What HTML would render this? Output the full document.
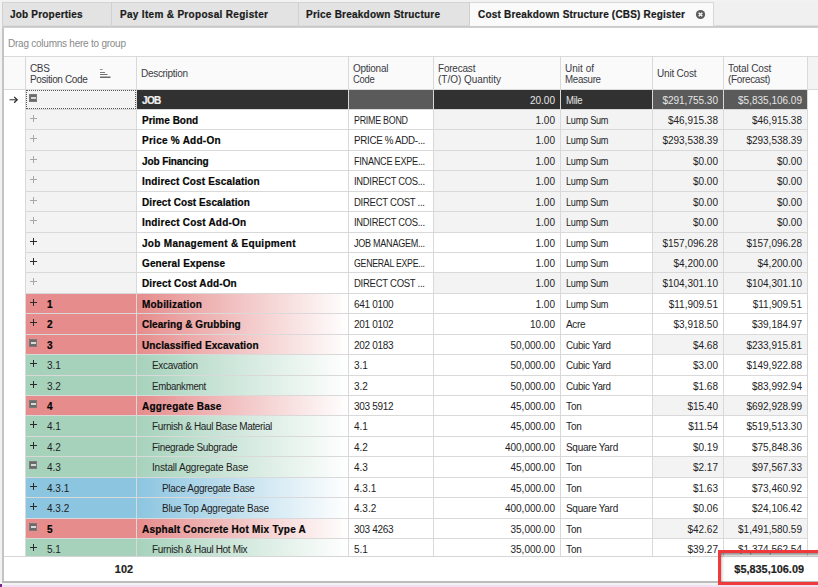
<!DOCTYPE html>
<html><head><meta charset="utf-8"><style>
*{margin:0;padding:0}
html,body{width:818px;height:587px;overflow:hidden;background:#f2f2f2}
.b{position:absolute}
.t{position:absolute;font-family:"Liberation Sans",sans-serif;font-size:10px;line-height:12px;white-space:nowrap;color:#1e1e1e}
.tb{font-weight:bold;letter-spacing:0.15px;color:#1a1a1a;-webkit-text-stroke:0.2px}
.rb{font-weight:bold;color:#050505;letter-spacing:0.15px;-webkit-text-stroke:0.2px}
.r{letter-spacing:-0.33px}
.h{letter-spacing:-0.35px;color:#3a3a44}
.n{letter-spacing:0}
.u{letter-spacing:-0.95px}
.fb{font-weight:bold;font-size:10.9px;-webkit-text-stroke:0.2px}
.mb{width:8px;height:8px;background:#6a6a6a;box-shadow:inset 0 0 0 1px #7a7a7a}
.mb:after{content:"";position:absolute;left:1.5px;top:3px;width:5px;height:2px;background:#d8d8d8}
</style></head>
<body>
<div class="b" style="left:0px;top:0px;width:818px;height:587px;background:#f2f2f2;"></div><div class="b" style="left:2px;top:2px;width:816px;height:24px;background:#f0f0f0;"></div><div class="b" style="left:2px;top:2px;width:109px;height:24px;background:#e3e3e3;"></div><div class="b" style="left:2px;top:2px;width:109px;height:1px;background:#d4d4d4;"></div><div class="b" style="left:2px;top:2px;width:1px;height:24px;background:#d0d0d0;"></div><div class="b" style="left:111px;top:2px;width:187px;height:24px;background:#e3e3e3;"></div><div class="b" style="left:111px;top:2px;width:187px;height:1px;background:#d4d4d4;"></div><div class="b" style="left:111px;top:2px;width:1px;height:24px;background:#d0d0d0;"></div><div class="b" style="left:298px;top:2px;width:172px;height:24px;background:#e3e3e3;"></div><div class="b" style="left:298px;top:2px;width:172px;height:1px;background:#d4d4d4;"></div><div class="b" style="left:298px;top:2px;width:1px;height:24px;background:#d0d0d0;"></div><div class="b" style="left:470px;top:2px;width:244px;height:24px;background:#fafafa;"></div><div class="b" style="left:470px;top:2px;width:244px;height:1px;background:#d8d8d8;"></div><div class="b" style="left:469px;top:2px;width:1px;height:24px;background:#cfcfcf;"></div><div class="b" style="left:713px;top:2px;width:1px;height:24px;background:#d8d8d8;"></div><div class="b" style="left:2px;top:25px;width:468px;height:1px;background:#dadada;"></div><div class="b" style="left:714px;top:25px;width:104px;height:1px;background:#dedede;"></div><div class="t tb" style="top:9px;left:10px;letter-spacing:0.199px;">Job Properties</div><div class="t tb" style="top:9px;left:120px;letter-spacing:0.315px;">Pay Item &amp; Proposal Register</div><div class="t tb" style="top:9px;left:306px;letter-spacing:0.235px;">Price Breakdown Structure</div><div class="t tb" style="top:9px;left:478px;letter-spacing:0.198px;">Cost Breakdown Structure (CBS) Register</div><svg class="b" style="left:695px;top:9px" width="11" height="11" viewBox="0 0 11 11"><circle cx="5.5" cy="5.5" r="4.6" fill="#5c5c5c"/><path d="M3.7 3.7L7.3 7.3M7.3 3.7L3.7 7.3" stroke="#f4f4f4" stroke-width="1.6"/></svg><div class="b" style="left:2px;top:27px;width:816px;height:556px;background:#ffffff;"></div><div class="b" style="left:2px;top:27px;width:2px;height:556px;background:#c4c4c4;"></div><div class="b" style="left:2px;top:581px;width:816px;height:2px;background:#bcbcbc;"></div><div class="b" style="left:2px;top:26px;width:816px;height:1px;background:#c9c9c9;"></div><div class="b" style="left:2px;top:27px;width:816px;height:1px;background:#d0d0d0;"></div><div class="b" style="left:0px;top:583px;width:818px;height:2px;background:#f3f3f3;"></div><div class="b" style="left:0px;top:585px;width:818px;height:2px;background:#f1e0f1;"></div><div class="b" style="left:0px;top:584px;width:2px;height:3px;background:#7a2a8a;"></div><div class="t r" style="top:38px;left:8px;color:#8a8a8a;letter-spacing:-0.238px;">Drag columns here to group</div><div class="b" style="left:4px;top:56px;width:814px;height:1px;background:#dadada;"></div><div class="b" style="left:4px;top:57px;width:814px;height:32px;background:#fafafa;"></div><div class="b" style="left:808px;top:57px;width:10px;height:32px;background:#f3f3f3;"></div><div class="b" style="left:4px;top:89px;width:814px;height:1px;background:#dadada;"></div><div class="b" style="left:25px;top:56px;width:1px;height:33px;background:#d9d9d9;"></div><div class="b" style="left:136px;top:56px;width:1px;height:33px;background:#d9d9d9;"></div><div class="b" style="left:348px;top:56px;width:1px;height:33px;background:#d9d9d9;"></div><div class="b" style="left:433px;top:56px;width:1px;height:33px;background:#d9d9d9;"></div><div class="b" style="left:560px;top:56px;width:1px;height:33px;background:#d9d9d9;"></div><div class="b" style="left:652px;top:56px;width:1px;height:33px;background:#d9d9d9;"></div><div class="b" style="left:723px;top:56px;width:1px;height:33px;background:#d9d9d9;"></div><div class="b" style="left:807px;top:56px;width:1px;height:33px;background:#d9d9d9;"></div><div class="t h" style="top:63px;left:30px;">CBS</div><div class="t h" style="top:74px;left:30px;letter-spacing:-0.380px;">Position Code</div><div class="t h" style="top:68px;left:141px;letter-spacing:-0.302px;">Description</div><div class="t h" style="top:63px;left:353px;letter-spacing:-0.263px;">Optional</div><div class="t h" style="top:74px;left:353px;letter-spacing:-0.3px;transform:scaleX(0.9433);transform-origin:left top;">Code</div><div class="t h" style="top:63px;left:438px;letter-spacing:-0.214px;">Forecast</div><div class="t h" style="top:74px;left:438px;letter-spacing:-0.026px;">(T/O) Quantity</div><div class="t h" style="top:63px;left:565px;letter-spacing:0.017px;">Unit of</div><div class="t h" style="top:74px;left:565px;letter-spacing:-0.3px;transform:scaleX(0.9703);transform-origin:left top;">Measure</div><div class="t h" style="top:68px;left:657px;letter-spacing:-0.203px;">Unit Cost</div><div class="t h" style="top:63px;left:728px;letter-spacing:-0.118px;">Total Cost</div><div class="t h" style="top:74px;left:728px;">(Forecast)</div><svg class="b" style="left:99px;top:68px" width="12" height="11" viewBox="0 0 12 11"><rect x="1" y="1" width="2.5" height="1" fill="#8a8a8a"/><rect x="1" y="4" width="5" height="1" fill="#7a7a7a"/><rect x="1" y="6" width="7.5" height="1" fill="#707070"/><rect x="1" y="8.5" width="10.5" height="1.5" fill="#6a6a6a"/></svg><div class="b" style="left:0;top:0;width:818px;height:556px;overflow:hidden"><div class="b" style="left:26px;top:90px;width:110px;height:19px;background:#f3f3f3;"></div><div class="b" style="left:137px;top:90px;width:211px;height:19px;background:#313131;"></div><div class="b" style="left:349px;top:90px;width:84px;height:19px;background:#5a5a5a;"></div><div class="b" style="left:434px;top:90px;width:126px;height:19px;background:#313131;"></div><div class="b" style="left:561px;top:90px;width:91px;height:19px;background:#313131;"></div><div class="b" style="left:653px;top:90px;width:70px;height:19px;background:#5a5a5a;"></div><div class="b" style="left:724px;top:90px;width:83px;height:19px;background:#5a5a5a;"></div><div class="b" style="left:26px;top:109px;width:781px;height:1px;background:#d9d9d9;"></div><div class="b" style="left:136px;top:89px;width:1px;height:21px;background:#d9d9d9;"></div><div class="b" style="left:348px;top:89px;width:1px;height:21px;background:#d9d9d9;"></div><div class="b" style="left:433px;top:89px;width:1px;height:21px;background:#d9d9d9;"></div><div class="b" style="left:560px;top:89px;width:1px;height:21px;background:#d9d9d9;"></div><div class="b" style="left:652px;top:89px;width:1px;height:21px;background:#d9d9d9;"></div><div class="b" style="left:723px;top:89px;width:1px;height:21px;background:#d9d9d9;"></div><div class="b" style="left:807px;top:89px;width:1px;height:21px;background:#d9d9d9;"></div><div class="b" style="left:25px;top:89px;width:1px;height:21px;background:#d9d9d9;"></div><div class="b mb" style="left:29px;top:94px"></div><div class="t rb" style="top:95px;left:142px;color:#f0f0f0;letter-spacing:-0.630px;">JOB</div><div class="t n" style="top:95px;right:263px;color:#e6e6e6;">20.00</div><div class="t r" style="top:95px;left:566px;color:#e6e6e6;letter-spacing:-0.3px;transform:scaleX(0.9521);transform-origin:left top;">Mile</div><div class="t n" style="top:95px;right:100px;color:#e6e6e6;">$291,755.30</div><div class="t n" style="top:95px;right:16px;color:#e6e6e6;">$5,835,106.09</div><div class="b" style="left:26px;top:90px;width:108px;height:17px;border:1px dotted #555"></div><div class="b" style="left:26px;top:110px;width:110px;height:19px;background:#f3f3f3;"></div><div class="b" style="left:137px;top:110px;width:211px;height:19px;background:#ffffff;"></div><div class="b" style="left:349px;top:110px;width:84px;height:19px;background:#ffffff;"></div><div class="b" style="left:434px;top:110px;width:126px;height:19px;background:#f3f3f3;"></div><div class="b" style="left:561px;top:110px;width:91px;height:19px;background:#f3f3f3;"></div><div class="b" style="left:653px;top:110px;width:70px;height:19px;background:#f3f3f3;"></div><div class="b" style="left:724px;top:110px;width:83px;height:19px;background:#f3f3f3;"></div><div class="b" style="left:26px;top:129px;width:781px;height:1px;background:#d9d9d9;"></div><div class="b" style="left:136px;top:109px;width:1px;height:21px;background:#d9d9d9;"></div><div class="b" style="left:348px;top:109px;width:1px;height:21px;background:#d9d9d9;"></div><div class="b" style="left:433px;top:109px;width:1px;height:21px;background:#d9d9d9;"></div><div class="b" style="left:560px;top:109px;width:1px;height:21px;background:#d9d9d9;"></div><div class="b" style="left:652px;top:109px;width:1px;height:21px;background:#d9d9d9;"></div><div class="b" style="left:723px;top:109px;width:1px;height:21px;background:#d9d9d9;"></div><div class="b" style="left:807px;top:109px;width:1px;height:21px;background:#d9d9d9;"></div><div class="b" style="left:25px;top:109px;width:1px;height:21px;background:#d9d9d9;"></div><svg class="b" style="left:30px;top:115px" width="7" height="7"><path d="M3.5 0V7M0 3.5H7" stroke="#a8a8a8" stroke-width="1"/></svg><div class="t rb" style="top:115px;left:142px;letter-spacing:0.009px;">Prime Bond</div><div class="t u" style="top:115px;left:354px;letter-spacing:-0.3px;transform:scaleX(0.8905);transform-origin:left top;">PRIME BOND</div><div class="t n" style="top:115px;right:263px;">1.00</div><div class="t r" style="top:115px;left:566px;letter-spacing:-0.3px;transform:scaleX(0.9189);transform-origin:left top;">Lump Sum</div><div class="t n" style="top:115px;right:100px;">$46,915.38</div><div class="t n" style="top:115px;right:16px;">$46,915.38</div><div class="b" style="left:26px;top:130px;width:110px;height:20px;background:#f3f3f3;"></div><div class="b" style="left:137px;top:130px;width:211px;height:20px;background:#ffffff;"></div><div class="b" style="left:349px;top:130px;width:84px;height:20px;background:#ffffff;"></div><div class="b" style="left:434px;top:130px;width:126px;height:20px;background:#f3f3f3;"></div><div class="b" style="left:561px;top:130px;width:91px;height:20px;background:#f3f3f3;"></div><div class="b" style="left:653px;top:130px;width:70px;height:20px;background:#f3f3f3;"></div><div class="b" style="left:724px;top:130px;width:83px;height:20px;background:#f3f3f3;"></div><div class="b" style="left:26px;top:150px;width:781px;height:1px;background:#d9d9d9;"></div><div class="b" style="left:136px;top:129px;width:1px;height:22px;background:#d9d9d9;"></div><div class="b" style="left:348px;top:129px;width:1px;height:22px;background:#d9d9d9;"></div><div class="b" style="left:433px;top:129px;width:1px;height:22px;background:#d9d9d9;"></div><div class="b" style="left:560px;top:129px;width:1px;height:22px;background:#d9d9d9;"></div><div class="b" style="left:652px;top:129px;width:1px;height:22px;background:#d9d9d9;"></div><div class="b" style="left:723px;top:129px;width:1px;height:22px;background:#d9d9d9;"></div><div class="b" style="left:807px;top:129px;width:1px;height:22px;background:#d9d9d9;"></div><div class="b" style="left:25px;top:129px;width:1px;height:22px;background:#d9d9d9;"></div><svg class="b" style="left:30px;top:135px" width="7" height="7"><path d="M3.5 0V7M0 3.5H7" stroke="#a8a8a8" stroke-width="1"/></svg><div class="t rb" style="top:135px;left:142px;letter-spacing:0.262px;">Price % Add-On</div><div class="t u" style="top:135px;left:354px;letter-spacing:-0.3px;transform:scaleX(0.9762);transform-origin:left top;">PRICE % ADD-...</div><div class="t n" style="top:135px;right:263px;">1.00</div><div class="t r" style="top:135px;left:566px;letter-spacing:-0.3px;transform:scaleX(0.9189);transform-origin:left top;">Lump Sum</div><div class="t n" style="top:135px;right:100px;">$293,538.39</div><div class="t n" style="top:135px;right:16px;">$293,538.39</div><div class="b" style="left:26px;top:151px;width:110px;height:19px;background:#f3f3f3;"></div><div class="b" style="left:137px;top:151px;width:211px;height:19px;background:#ffffff;"></div><div class="b" style="left:349px;top:151px;width:84px;height:19px;background:#ffffff;"></div><div class="b" style="left:434px;top:151px;width:126px;height:19px;background:#f3f3f3;"></div><div class="b" style="left:561px;top:151px;width:91px;height:19px;background:#f3f3f3;"></div><div class="b" style="left:653px;top:151px;width:70px;height:19px;background:#f3f3f3;"></div><div class="b" style="left:724px;top:151px;width:83px;height:19px;background:#f3f3f3;"></div><div class="b" style="left:26px;top:170px;width:781px;height:1px;background:#d9d9d9;"></div><div class="b" style="left:136px;top:150px;width:1px;height:21px;background:#d9d9d9;"></div><div class="b" style="left:348px;top:150px;width:1px;height:21px;background:#d9d9d9;"></div><div class="b" style="left:433px;top:150px;width:1px;height:21px;background:#d9d9d9;"></div><div class="b" style="left:560px;top:150px;width:1px;height:21px;background:#d9d9d9;"></div><div class="b" style="left:652px;top:150px;width:1px;height:21px;background:#d9d9d9;"></div><div class="b" style="left:723px;top:150px;width:1px;height:21px;background:#d9d9d9;"></div><div class="b" style="left:807px;top:150px;width:1px;height:21px;background:#d9d9d9;"></div><div class="b" style="left:25px;top:150px;width:1px;height:21px;background:#d9d9d9;"></div><svg class="b" style="left:30px;top:156px" width="7" height="7"><path d="M3.5 0V7M0 3.5H7" stroke="#a8a8a8" stroke-width="1"/></svg><div class="t rb" style="top:156px;left:142px;letter-spacing:-0.098px;">Job Financing</div><div class="t u" style="top:156px;left:354px;letter-spacing:-0.3px;transform:scaleX(0.9163);transform-origin:left top;">FINANCE EXPE...</div><div class="t n" style="top:156px;right:263px;">1.00</div><div class="t r" style="top:156px;left:566px;letter-spacing:-0.3px;transform:scaleX(0.9189);transform-origin:left top;">Lump Sum</div><div class="t n" style="top:156px;right:100px;">$0.00</div><div class="t n" style="top:156px;right:16px;">$0.00</div><div class="b" style="left:26px;top:171px;width:110px;height:20px;background:#f3f3f3;"></div><div class="b" style="left:137px;top:171px;width:211px;height:20px;background:#ffffff;"></div><div class="b" style="left:349px;top:171px;width:84px;height:20px;background:#ffffff;"></div><div class="b" style="left:434px;top:171px;width:126px;height:20px;background:#f3f3f3;"></div><div class="b" style="left:561px;top:171px;width:91px;height:20px;background:#f3f3f3;"></div><div class="b" style="left:653px;top:171px;width:70px;height:20px;background:#f3f3f3;"></div><div class="b" style="left:724px;top:171px;width:83px;height:20px;background:#f3f3f3;"></div><div class="b" style="left:26px;top:191px;width:781px;height:1px;background:#d9d9d9;"></div><div class="b" style="left:136px;top:170px;width:1px;height:22px;background:#d9d9d9;"></div><div class="b" style="left:348px;top:170px;width:1px;height:22px;background:#d9d9d9;"></div><div class="b" style="left:433px;top:170px;width:1px;height:22px;background:#d9d9d9;"></div><div class="b" style="left:560px;top:170px;width:1px;height:22px;background:#d9d9d9;"></div><div class="b" style="left:652px;top:170px;width:1px;height:22px;background:#d9d9d9;"></div><div class="b" style="left:723px;top:170px;width:1px;height:22px;background:#d9d9d9;"></div><div class="b" style="left:807px;top:170px;width:1px;height:22px;background:#d9d9d9;"></div><div class="b" style="left:25px;top:170px;width:1px;height:22px;background:#d9d9d9;"></div><svg class="b" style="left:30px;top:176px" width="7" height="7"><path d="M3.5 0V7M0 3.5H7" stroke="#a8a8a8" stroke-width="1"/></svg><div class="t rb" style="top:176px;left:142px;letter-spacing:0.165px;">Indirect Cost Escalation</div><div class="t u" style="top:176px;left:354px;letter-spacing:-0.3px;transform:scaleX(0.9389);transform-origin:left top;">INDIRECT COS...</div><div class="t n" style="top:176px;right:263px;">1.00</div><div class="t r" style="top:176px;left:566px;letter-spacing:-0.3px;transform:scaleX(0.9189);transform-origin:left top;">Lump Sum</div><div class="t n" style="top:176px;right:100px;">$0.00</div><div class="t n" style="top:176px;right:16px;">$0.00</div><div class="b" style="left:26px;top:192px;width:110px;height:19px;background:#f3f3f3;"></div><div class="b" style="left:137px;top:192px;width:211px;height:19px;background:#ffffff;"></div><div class="b" style="left:349px;top:192px;width:84px;height:19px;background:#ffffff;"></div><div class="b" style="left:434px;top:192px;width:126px;height:19px;background:#f3f3f3;"></div><div class="b" style="left:561px;top:192px;width:91px;height:19px;background:#f3f3f3;"></div><div class="b" style="left:653px;top:192px;width:70px;height:19px;background:#f3f3f3;"></div><div class="b" style="left:724px;top:192px;width:83px;height:19px;background:#f3f3f3;"></div><div class="b" style="left:26px;top:211px;width:781px;height:1px;background:#d9d9d9;"></div><div class="b" style="left:136px;top:191px;width:1px;height:21px;background:#d9d9d9;"></div><div class="b" style="left:348px;top:191px;width:1px;height:21px;background:#d9d9d9;"></div><div class="b" style="left:433px;top:191px;width:1px;height:21px;background:#d9d9d9;"></div><div class="b" style="left:560px;top:191px;width:1px;height:21px;background:#d9d9d9;"></div><div class="b" style="left:652px;top:191px;width:1px;height:21px;background:#d9d9d9;"></div><div class="b" style="left:723px;top:191px;width:1px;height:21px;background:#d9d9d9;"></div><div class="b" style="left:807px;top:191px;width:1px;height:21px;background:#d9d9d9;"></div><div class="b" style="left:25px;top:191px;width:1px;height:21px;background:#d9d9d9;"></div><svg class="b" style="left:30px;top:197px" width="7" height="7"><path d="M3.5 0V7M0 3.5H7" stroke="#a8a8a8" stroke-width="1"/></svg><div class="t rb" style="top:197px;left:142px;letter-spacing:0.079px;">Direct Cost Escalation</div><div class="t u" style="top:197px;left:354px;letter-spacing:-0.3px;transform:scaleX(0.9552);transform-origin:left top;">DIRECT COST ...</div><div class="t n" style="top:197px;right:263px;">1.00</div><div class="t r" style="top:197px;left:566px;letter-spacing:-0.3px;transform:scaleX(0.9189);transform-origin:left top;">Lump Sum</div><div class="t n" style="top:197px;right:100px;">$0.00</div><div class="t n" style="top:197px;right:16px;">$0.00</div><div class="b" style="left:26px;top:212px;width:110px;height:20px;background:#f3f3f3;"></div><div class="b" style="left:137px;top:212px;width:211px;height:20px;background:#ffffff;"></div><div class="b" style="left:349px;top:212px;width:84px;height:20px;background:#ffffff;"></div><div class="b" style="left:434px;top:212px;width:126px;height:20px;background:#f3f3f3;"></div><div class="b" style="left:561px;top:212px;width:91px;height:20px;background:#f3f3f3;"></div><div class="b" style="left:653px;top:212px;width:70px;height:20px;background:#f3f3f3;"></div><div class="b" style="left:724px;top:212px;width:83px;height:20px;background:#f3f3f3;"></div><div class="b" style="left:26px;top:232px;width:781px;height:1px;background:#d9d9d9;"></div><div class="b" style="left:136px;top:211px;width:1px;height:22px;background:#d9d9d9;"></div><div class="b" style="left:348px;top:211px;width:1px;height:22px;background:#d9d9d9;"></div><div class="b" style="left:433px;top:211px;width:1px;height:22px;background:#d9d9d9;"></div><div class="b" style="left:560px;top:211px;width:1px;height:22px;background:#d9d9d9;"></div><div class="b" style="left:652px;top:211px;width:1px;height:22px;background:#d9d9d9;"></div><div class="b" style="left:723px;top:211px;width:1px;height:22px;background:#d9d9d9;"></div><div class="b" style="left:807px;top:211px;width:1px;height:22px;background:#d9d9d9;"></div><div class="b" style="left:25px;top:211px;width:1px;height:22px;background:#d9d9d9;"></div><svg class="b" style="left:30px;top:217px" width="7" height="7"><path d="M3.5 0V7M0 3.5H7" stroke="#a8a8a8" stroke-width="1"/></svg><div class="t rb" style="top:217px;left:142px;letter-spacing:0.207px;">Indirect Cost Add-On</div><div class="t u" style="top:217px;left:354px;letter-spacing:-0.3px;transform:scaleX(0.9389);transform-origin:left top;">INDIRECT COS...</div><div class="t n" style="top:217px;right:263px;">1.00</div><div class="t r" style="top:217px;left:566px;letter-spacing:-0.3px;transform:scaleX(0.9189);transform-origin:left top;">Lump Sum</div><div class="t n" style="top:217px;right:100px;">$0.00</div><div class="t n" style="top:217px;right:16px;">$0.00</div><div class="b" style="left:26px;top:233px;width:110px;height:19px;background:#f3f3f3;"></div><div class="b" style="left:137px;top:233px;width:211px;height:19px;background:#ffffff;"></div><div class="b" style="left:349px;top:233px;width:84px;height:19px;background:#ffffff;"></div><div class="b" style="left:434px;top:233px;width:126px;height:19px;background:#ffffff;"></div><div class="b" style="left:561px;top:233px;width:91px;height:19px;background:#ffffff;"></div><div class="b" style="left:653px;top:233px;width:70px;height:19px;background:#f3f3f3;"></div><div class="b" style="left:724px;top:233px;width:83px;height:19px;background:#f3f3f3;"></div><div class="b" style="left:26px;top:252px;width:781px;height:1px;background:#d9d9d9;"></div><div class="b" style="left:136px;top:232px;width:1px;height:21px;background:#d9d9d9;"></div><div class="b" style="left:348px;top:232px;width:1px;height:21px;background:#d9d9d9;"></div><div class="b" style="left:433px;top:232px;width:1px;height:21px;background:#d9d9d9;"></div><div class="b" style="left:560px;top:232px;width:1px;height:21px;background:#d9d9d9;"></div><div class="b" style="left:652px;top:232px;width:1px;height:21px;background:#d9d9d9;"></div><div class="b" style="left:723px;top:232px;width:1px;height:21px;background:#d9d9d9;"></div><div class="b" style="left:807px;top:232px;width:1px;height:21px;background:#d9d9d9;"></div><div class="b" style="left:25px;top:232px;width:1px;height:21px;background:#d9d9d9;"></div><svg class="b" style="left:30px;top:238px" width="7" height="7"><path d="M3.5 0V7M0 3.5H7" stroke="#2a2a2a" stroke-width="1"/></svg><div class="t rb" style="top:238px;left:142px;letter-spacing:0.299px;">Job Management &amp; Equipment</div><div class="t u" style="top:238px;left:354px;letter-spacing:-0.3px;transform:scaleX(0.9064);transform-origin:left top;">JOB MANAGEM...</div><div class="t n" style="top:238px;right:263px;">1.00</div><div class="t r" style="top:238px;left:566px;letter-spacing:-0.3px;transform:scaleX(0.9189);transform-origin:left top;">Lump Sum</div><div class="t n" style="top:238px;right:100px;">$157,096.28</div><div class="t n" style="top:238px;right:16px;">$157,096.28</div><div class="b" style="left:26px;top:253px;width:110px;height:19px;background:#f3f3f3;"></div><div class="b" style="left:137px;top:253px;width:211px;height:19px;background:#ffffff;"></div><div class="b" style="left:349px;top:253px;width:84px;height:19px;background:#ffffff;"></div><div class="b" style="left:434px;top:253px;width:126px;height:19px;background:#ffffff;"></div><div class="b" style="left:561px;top:253px;width:91px;height:19px;background:#ffffff;"></div><div class="b" style="left:653px;top:253px;width:70px;height:19px;background:#f3f3f3;"></div><div class="b" style="left:724px;top:253px;width:83px;height:19px;background:#f3f3f3;"></div><div class="b" style="left:26px;top:272px;width:781px;height:1px;background:#d9d9d9;"></div><div class="b" style="left:136px;top:252px;width:1px;height:21px;background:#d9d9d9;"></div><div class="b" style="left:348px;top:252px;width:1px;height:21px;background:#d9d9d9;"></div><div class="b" style="left:433px;top:252px;width:1px;height:21px;background:#d9d9d9;"></div><div class="b" style="left:560px;top:252px;width:1px;height:21px;background:#d9d9d9;"></div><div class="b" style="left:652px;top:252px;width:1px;height:21px;background:#d9d9d9;"></div><div class="b" style="left:723px;top:252px;width:1px;height:21px;background:#d9d9d9;"></div><div class="b" style="left:807px;top:252px;width:1px;height:21px;background:#d9d9d9;"></div><div class="b" style="left:25px;top:252px;width:1px;height:21px;background:#d9d9d9;"></div><svg class="b" style="left:30px;top:258px" width="7" height="7"><path d="M3.5 0V7M0 3.5H7" stroke="#2a2a2a" stroke-width="1"/></svg><div class="t rb" style="top:258px;left:142px;letter-spacing:0.140px;">General Expense</div><div class="t u" style="top:258px;left:354px;letter-spacing:-0.3px;transform:scaleX(0.8764);transform-origin:left top;">GENERAL EXPE...</div><div class="t n" style="top:258px;right:263px;">1.00</div><div class="t r" style="top:258px;left:566px;letter-spacing:-0.3px;transform:scaleX(0.9189);transform-origin:left top;">Lump Sum</div><div class="t n" style="top:258px;right:100px;">$4,200.00</div><div class="t n" style="top:258px;right:16px;">$4,200.00</div><div class="b" style="left:26px;top:273px;width:110px;height:20px;background:#f3f3f3;"></div><div class="b" style="left:137px;top:273px;width:211px;height:20px;background:#ffffff;"></div><div class="b" style="left:349px;top:273px;width:84px;height:20px;background:#ffffff;"></div><div class="b" style="left:434px;top:273px;width:126px;height:20px;background:#f3f3f3;"></div><div class="b" style="left:561px;top:273px;width:91px;height:20px;background:#f3f3f3;"></div><div class="b" style="left:653px;top:273px;width:70px;height:20px;background:#f3f3f3;"></div><div class="b" style="left:724px;top:273px;width:83px;height:20px;background:#f3f3f3;"></div><div class="b" style="left:26px;top:293px;width:781px;height:1px;background:#d9d9d9;"></div><div class="b" style="left:136px;top:272px;width:1px;height:22px;background:#d9d9d9;"></div><div class="b" style="left:348px;top:272px;width:1px;height:22px;background:#d9d9d9;"></div><div class="b" style="left:433px;top:272px;width:1px;height:22px;background:#d9d9d9;"></div><div class="b" style="left:560px;top:272px;width:1px;height:22px;background:#d9d9d9;"></div><div class="b" style="left:652px;top:272px;width:1px;height:22px;background:#d9d9d9;"></div><div class="b" style="left:723px;top:272px;width:1px;height:22px;background:#d9d9d9;"></div><div class="b" style="left:807px;top:272px;width:1px;height:22px;background:#d9d9d9;"></div><div class="b" style="left:25px;top:272px;width:1px;height:22px;background:#d9d9d9;"></div><svg class="b" style="left:30px;top:278px" width="7" height="7"><path d="M3.5 0V7M0 3.5H7" stroke="#a8a8a8" stroke-width="1"/></svg><div class="t rb" style="top:278px;left:142px;letter-spacing:0.135px;">Direct Cost Add-On</div><div class="t u" style="top:278px;left:354px;letter-spacing:-0.3px;transform:scaleX(0.9552);transform-origin:left top;">DIRECT COST ...</div><div class="t n" style="top:278px;right:263px;">1.00</div><div class="t r" style="top:278px;left:566px;letter-spacing:-0.3px;transform:scaleX(0.9189);transform-origin:left top;">Lump Sum</div><div class="t n" style="top:278px;right:100px;">$104,301.10</div><div class="t n" style="top:278px;right:16px;">$104,301.10</div><div class="b" style="left:26px;top:294px;width:110px;height:19px;background:#e68c8c;"></div><div class="b" style="left:137px;top:294px;width:211px;height:19px;background:linear-gradient(90deg,#e68c8c 0%,#ffffff 100%);"></div><div class="b" style="left:349px;top:294px;width:84px;height:19px;background:#ffffff;"></div><div class="b" style="left:434px;top:294px;width:126px;height:19px;background:#ffffff;"></div><div class="b" style="left:561px;top:294px;width:91px;height:19px;background:#ffffff;"></div><div class="b" style="left:653px;top:294px;width:70px;height:19px;background:#ffffff;"></div><div class="b" style="left:724px;top:294px;width:83px;height:19px;background:#ffffff;"></div><div class="b" style="left:26px;top:313px;width:781px;height:1px;background:#d9d9d9;"></div><div class="b" style="left:136px;top:293px;width:1px;height:21px;background:#d9d9d9;"></div><div class="b" style="left:348px;top:293px;width:1px;height:21px;background:#d9d9d9;"></div><div class="b" style="left:433px;top:293px;width:1px;height:21px;background:#d9d9d9;"></div><div class="b" style="left:560px;top:293px;width:1px;height:21px;background:#d9d9d9;"></div><div class="b" style="left:652px;top:293px;width:1px;height:21px;background:#d9d9d9;"></div><div class="b" style="left:723px;top:293px;width:1px;height:21px;background:#d9d9d9;"></div><div class="b" style="left:807px;top:293px;width:1px;height:21px;background:#d9d9d9;"></div><div class="b" style="left:25px;top:293px;width:1px;height:21px;background:#d9d9d9;"></div><svg class="b" style="left:30px;top:299px" width="7" height="7"><path d="M3.5 0V7M0 3.5H7" stroke="#2a2a2a" stroke-width="1"/></svg><div class="t rb" style="top:299px;left:47px;">1</div><div class="t rb" style="top:299px;left:142px;letter-spacing:0.194px;">Mobilization</div><div class="t n" style="top:299px;left:354px;letter-spacing:-0.315px;">641 0100</div><div class="t n" style="top:299px;right:263px;">1.00</div><div class="t r" style="top:299px;left:566px;letter-spacing:-0.3px;transform:scaleX(0.9189);transform-origin:left top;">Lump Sum</div><div class="t n" style="top:299px;right:100px;">$11,909.51</div><div class="t n" style="top:299px;right:16px;">$11,909.51</div><div class="b" style="left:26px;top:314px;width:110px;height:20px;background:#e68c8c;"></div><div class="b" style="left:137px;top:314px;width:211px;height:20px;background:linear-gradient(90deg,#e68c8c 0%,#ffffff 100%);"></div><div class="b" style="left:349px;top:314px;width:84px;height:20px;background:#ffffff;"></div><div class="b" style="left:434px;top:314px;width:126px;height:20px;background:#ffffff;"></div><div class="b" style="left:561px;top:314px;width:91px;height:20px;background:#ffffff;"></div><div class="b" style="left:653px;top:314px;width:70px;height:20px;background:#ffffff;"></div><div class="b" style="left:724px;top:314px;width:83px;height:20px;background:#ffffff;"></div><div class="b" style="left:26px;top:334px;width:781px;height:1px;background:#d9d9d9;"></div><div class="b" style="left:136px;top:313px;width:1px;height:22px;background:#d9d9d9;"></div><div class="b" style="left:348px;top:313px;width:1px;height:22px;background:#d9d9d9;"></div><div class="b" style="left:433px;top:313px;width:1px;height:22px;background:#d9d9d9;"></div><div class="b" style="left:560px;top:313px;width:1px;height:22px;background:#d9d9d9;"></div><div class="b" style="left:652px;top:313px;width:1px;height:22px;background:#d9d9d9;"></div><div class="b" style="left:723px;top:313px;width:1px;height:22px;background:#d9d9d9;"></div><div class="b" style="left:807px;top:313px;width:1px;height:22px;background:#d9d9d9;"></div><div class="b" style="left:25px;top:313px;width:1px;height:22px;background:#d9d9d9;"></div><svg class="b" style="left:30px;top:319px" width="7" height="7"><path d="M3.5 0V7M0 3.5H7" stroke="#2a2a2a" stroke-width="1"/></svg><div class="t rb" style="top:319px;left:47px;">2</div><div class="t rb" style="top:319px;left:142px;letter-spacing:0.051px;">Clearing &amp; Grubbing</div><div class="t n" style="top:319px;left:354px;letter-spacing:-0.315px;">201 0102</div><div class="t n" style="top:319px;right:263px;">10.00</div><div class="t r" style="top:319px;left:566px;letter-spacing:-0.320px;">Acre</div><div class="t n" style="top:319px;right:100px;">$3,918.50</div><div class="t n" style="top:319px;right:16px;">$39,184.97</div><div class="b" style="left:26px;top:335px;width:110px;height:19px;background:#e68c8c;"></div><div class="b" style="left:137px;top:335px;width:211px;height:19px;background:linear-gradient(90deg,#e68c8c 0%,#ffffff 100%);"></div><div class="b" style="left:349px;top:335px;width:84px;height:19px;background:#ffffff;"></div><div class="b" style="left:434px;top:335px;width:126px;height:19px;background:#ffffff;"></div><div class="b" style="left:561px;top:335px;width:91px;height:19px;background:#ffffff;"></div><div class="b" style="left:653px;top:335px;width:70px;height:19px;background:#f3f3f3;"></div><div class="b" style="left:724px;top:335px;width:83px;height:19px;background:#f3f3f3;"></div><div class="b" style="left:26px;top:354px;width:781px;height:1px;background:#d9d9d9;"></div><div class="b" style="left:136px;top:334px;width:1px;height:21px;background:#d9d9d9;"></div><div class="b" style="left:348px;top:334px;width:1px;height:21px;background:#d9d9d9;"></div><div class="b" style="left:433px;top:334px;width:1px;height:21px;background:#d9d9d9;"></div><div class="b" style="left:560px;top:334px;width:1px;height:21px;background:#d9d9d9;"></div><div class="b" style="left:652px;top:334px;width:1px;height:21px;background:#d9d9d9;"></div><div class="b" style="left:723px;top:334px;width:1px;height:21px;background:#d9d9d9;"></div><div class="b" style="left:807px;top:334px;width:1px;height:21px;background:#d9d9d9;"></div><div class="b" style="left:25px;top:334px;width:1px;height:21px;background:#d9d9d9;"></div><div class="b mb" style="left:29px;top:339px"></div><div class="t rb" style="top:340px;left:47px;">3</div><div class="t rb" style="top:340px;left:142px;letter-spacing:0.092px;">Unclassified Excavation</div><div class="t n" style="top:340px;left:354px;letter-spacing:-0.315px;">202 0183</div><div class="t n" style="top:340px;right:263px;">50,000.00</div><div class="t r" style="top:340px;left:566px;letter-spacing:-0.3px;transform:scaleX(0.9816);transform-origin:left top;">Cubic Yard</div><div class="t n" style="top:340px;right:100px;">$4.68</div><div class="t n" style="top:340px;right:16px;">$233,915.81</div><div class="b" style="left:26px;top:355px;width:110px;height:20px;background:#a6d2bc;"></div><div class="b" style="left:137px;top:355px;width:211px;height:20px;background:linear-gradient(90deg,#a6d2bc 0%,#ffffff 100%);"></div><div class="b" style="left:349px;top:355px;width:84px;height:20px;background:#ffffff;"></div><div class="b" style="left:434px;top:355px;width:126px;height:20px;background:#ffffff;"></div><div class="b" style="left:561px;top:355px;width:91px;height:20px;background:#ffffff;"></div><div class="b" style="left:653px;top:355px;width:70px;height:20px;background:#ffffff;"></div><div class="b" style="left:724px;top:355px;width:83px;height:20px;background:#ffffff;"></div><div class="b" style="left:26px;top:375px;width:781px;height:1px;background:#d9d9d9;"></div><div class="b" style="left:136px;top:354px;width:1px;height:22px;background:#d9d9d9;"></div><div class="b" style="left:348px;top:354px;width:1px;height:22px;background:#d9d9d9;"></div><div class="b" style="left:433px;top:354px;width:1px;height:22px;background:#d9d9d9;"></div><div class="b" style="left:560px;top:354px;width:1px;height:22px;background:#d9d9d9;"></div><div class="b" style="left:652px;top:354px;width:1px;height:22px;background:#d9d9d9;"></div><div class="b" style="left:723px;top:354px;width:1px;height:22px;background:#d9d9d9;"></div><div class="b" style="left:807px;top:354px;width:1px;height:22px;background:#d9d9d9;"></div><div class="b" style="left:25px;top:354px;width:1px;height:22px;background:#d9d9d9;"></div><svg class="b" style="left:30px;top:360px" width="7" height="7"><path d="M3.5 0V7M0 3.5H7" stroke="#2a2a2a" stroke-width="1"/></svg><div class="t n" style="top:360px;left:47px;">3.1</div><div class="t r" style="top:360px;left:152px;letter-spacing:-0.324px;">Excavation</div><div class="t n" style="top:360px;left:354px;">3.1</div><div class="t n" style="top:360px;right:263px;">50,000.00</div><div class="t r" style="top:360px;left:566px;letter-spacing:-0.3px;transform:scaleX(0.9816);transform-origin:left top;">Cubic Yard</div><div class="t n" style="top:360px;right:100px;">$3.00</div><div class="t n" style="top:360px;right:16px;">$149,922.88</div><div class="b" style="left:26px;top:376px;width:110px;height:19px;background:#a6d2bc;"></div><div class="b" style="left:137px;top:376px;width:211px;height:19px;background:linear-gradient(90deg,#a6d2bc 0%,#ffffff 100%);"></div><div class="b" style="left:349px;top:376px;width:84px;height:19px;background:#ffffff;"></div><div class="b" style="left:434px;top:376px;width:126px;height:19px;background:#ffffff;"></div><div class="b" style="left:561px;top:376px;width:91px;height:19px;background:#ffffff;"></div><div class="b" style="left:653px;top:376px;width:70px;height:19px;background:#ffffff;"></div><div class="b" style="left:724px;top:376px;width:83px;height:19px;background:#ffffff;"></div><div class="b" style="left:26px;top:395px;width:781px;height:1px;background:#d9d9d9;"></div><div class="b" style="left:136px;top:375px;width:1px;height:21px;background:#d9d9d9;"></div><div class="b" style="left:348px;top:375px;width:1px;height:21px;background:#d9d9d9;"></div><div class="b" style="left:433px;top:375px;width:1px;height:21px;background:#d9d9d9;"></div><div class="b" style="left:560px;top:375px;width:1px;height:21px;background:#d9d9d9;"></div><div class="b" style="left:652px;top:375px;width:1px;height:21px;background:#d9d9d9;"></div><div class="b" style="left:723px;top:375px;width:1px;height:21px;background:#d9d9d9;"></div><div class="b" style="left:807px;top:375px;width:1px;height:21px;background:#d9d9d9;"></div><div class="b" style="left:25px;top:375px;width:1px;height:21px;background:#d9d9d9;"></div><svg class="b" style="left:30px;top:381px" width="7" height="7"><path d="M3.5 0V7M0 3.5H7" stroke="#2a2a2a" stroke-width="1"/></svg><div class="t n" style="top:381px;left:47px;">3.2</div><div class="t r" style="top:381px;left:152px;letter-spacing:-0.3px;transform:scaleX(0.9642);transform-origin:left top;">Embankment</div><div class="t n" style="top:381px;left:354px;">3.2</div><div class="t n" style="top:381px;right:263px;">50,000.00</div><div class="t r" style="top:381px;left:566px;letter-spacing:-0.3px;transform:scaleX(0.9816);transform-origin:left top;">Cubic Yard</div><div class="t n" style="top:381px;right:100px;">$1.68</div><div class="t n" style="top:381px;right:16px;">$83,992.94</div><div class="b" style="left:26px;top:396px;width:110px;height:19px;background:#e68c8c;"></div><div class="b" style="left:137px;top:396px;width:211px;height:19px;background:linear-gradient(90deg,#e68c8c 0%,#ffffff 100%);"></div><div class="b" style="left:349px;top:396px;width:84px;height:19px;background:#ffffff;"></div><div class="b" style="left:434px;top:396px;width:126px;height:19px;background:#ffffff;"></div><div class="b" style="left:561px;top:396px;width:91px;height:19px;background:#ffffff;"></div><div class="b" style="left:653px;top:396px;width:70px;height:19px;background:#f3f3f3;"></div><div class="b" style="left:724px;top:396px;width:83px;height:19px;background:#f3f3f3;"></div><div class="b" style="left:26px;top:415px;width:781px;height:1px;background:#d9d9d9;"></div><div class="b" style="left:136px;top:395px;width:1px;height:21px;background:#d9d9d9;"></div><div class="b" style="left:348px;top:395px;width:1px;height:21px;background:#d9d9d9;"></div><div class="b" style="left:433px;top:395px;width:1px;height:21px;background:#d9d9d9;"></div><div class="b" style="left:560px;top:395px;width:1px;height:21px;background:#d9d9d9;"></div><div class="b" style="left:652px;top:395px;width:1px;height:21px;background:#d9d9d9;"></div><div class="b" style="left:723px;top:395px;width:1px;height:21px;background:#d9d9d9;"></div><div class="b" style="left:807px;top:395px;width:1px;height:21px;background:#d9d9d9;"></div><div class="b" style="left:25px;top:395px;width:1px;height:21px;background:#d9d9d9;"></div><div class="b mb" style="left:29px;top:400px"></div><div class="t rb" style="top:401px;left:47px;">4</div><div class="t rb" style="top:401px;left:142px;letter-spacing:0.251px;">Aggregate Base</div><div class="t n" style="top:401px;left:354px;letter-spacing:-0.315px;">303 5912</div><div class="t n" style="top:401px;right:263px;">45,000.00</div><div class="t r" style="top:401px;left:566px;letter-spacing:-0.111px;">Ton</div><div class="t n" style="top:401px;right:100px;">$15.40</div><div class="t n" style="top:401px;right:16px;">$692,928.99</div><div class="b" style="left:26px;top:416px;width:110px;height:20px;background:#a6d2bc;"></div><div class="b" style="left:137px;top:416px;width:211px;height:20px;background:linear-gradient(90deg,#a6d2bc 0%,#ffffff 100%);"></div><div class="b" style="left:349px;top:416px;width:84px;height:20px;background:#ffffff;"></div><div class="b" style="left:434px;top:416px;width:126px;height:20px;background:#ffffff;"></div><div class="b" style="left:561px;top:416px;width:91px;height:20px;background:#ffffff;"></div><div class="b" style="left:653px;top:416px;width:70px;height:20px;background:#ffffff;"></div><div class="b" style="left:724px;top:416px;width:83px;height:20px;background:#ffffff;"></div><div class="b" style="left:26px;top:436px;width:781px;height:1px;background:#d9d9d9;"></div><div class="b" style="left:136px;top:415px;width:1px;height:22px;background:#d9d9d9;"></div><div class="b" style="left:348px;top:415px;width:1px;height:22px;background:#d9d9d9;"></div><div class="b" style="left:433px;top:415px;width:1px;height:22px;background:#d9d9d9;"></div><div class="b" style="left:560px;top:415px;width:1px;height:22px;background:#d9d9d9;"></div><div class="b" style="left:652px;top:415px;width:1px;height:22px;background:#d9d9d9;"></div><div class="b" style="left:723px;top:415px;width:1px;height:22px;background:#d9d9d9;"></div><div class="b" style="left:807px;top:415px;width:1px;height:22px;background:#d9d9d9;"></div><div class="b" style="left:25px;top:415px;width:1px;height:22px;background:#d9d9d9;"></div><svg class="b" style="left:30px;top:421px" width="7" height="7"><path d="M3.5 0V7M0 3.5H7" stroke="#2a2a2a" stroke-width="1"/></svg><div class="t n" style="top:421px;left:47px;">4.1</div><div class="t r" style="top:421px;left:152px;letter-spacing:-0.361px;">Furnish &amp; Haul Base Material</div><div class="t n" style="top:421px;left:354px;">4.1</div><div class="t n" style="top:421px;right:263px;">45,000.00</div><div class="t r" style="top:421px;left:566px;letter-spacing:-0.111px;">Ton</div><div class="t n" style="top:421px;right:100px;">$11.54</div><div class="t n" style="top:421px;right:16px;">$519,513.30</div><div class="b" style="left:26px;top:437px;width:110px;height:19px;background:#a6d2bc;"></div><div class="b" style="left:137px;top:437px;width:211px;height:19px;background:linear-gradient(90deg,#a6d2bc 0%,#ffffff 100%);"></div><div class="b" style="left:349px;top:437px;width:84px;height:19px;background:#ffffff;"></div><div class="b" style="left:434px;top:437px;width:126px;height:19px;background:#ffffff;"></div><div class="b" style="left:561px;top:437px;width:91px;height:19px;background:#ffffff;"></div><div class="b" style="left:653px;top:437px;width:70px;height:19px;background:#ffffff;"></div><div class="b" style="left:724px;top:437px;width:83px;height:19px;background:#ffffff;"></div><div class="b" style="left:26px;top:456px;width:781px;height:1px;background:#d9d9d9;"></div><div class="b" style="left:136px;top:436px;width:1px;height:21px;background:#d9d9d9;"></div><div class="b" style="left:348px;top:436px;width:1px;height:21px;background:#d9d9d9;"></div><div class="b" style="left:433px;top:436px;width:1px;height:21px;background:#d9d9d9;"></div><div class="b" style="left:560px;top:436px;width:1px;height:21px;background:#d9d9d9;"></div><div class="b" style="left:652px;top:436px;width:1px;height:21px;background:#d9d9d9;"></div><div class="b" style="left:723px;top:436px;width:1px;height:21px;background:#d9d9d9;"></div><div class="b" style="left:807px;top:436px;width:1px;height:21px;background:#d9d9d9;"></div><div class="b" style="left:25px;top:436px;width:1px;height:21px;background:#d9d9d9;"></div><svg class="b" style="left:30px;top:442px" width="7" height="7"><path d="M3.5 0V7M0 3.5H7" stroke="#2a2a2a" stroke-width="1"/></svg><div class="t n" style="top:442px;left:47px;">4.2</div><div class="t r" style="top:442px;left:152px;letter-spacing:-0.333px;">Finegrade Subgrade</div><div class="t n" style="top:442px;left:354px;">4.2</div><div class="t n" style="top:442px;right:263px;">400,000.00</div><div class="t r" style="top:442px;left:566px;letter-spacing:-0.302px;">Square Yard</div><div class="t n" style="top:442px;right:100px;">$0.19</div><div class="t n" style="top:442px;right:16px;">$75,848.36</div><div class="b" style="left:26px;top:457px;width:110px;height:20px;background:#a6d2bc;"></div><div class="b" style="left:137px;top:457px;width:211px;height:20px;background:linear-gradient(90deg,#a6d2bc 0%,#ffffff 100%);"></div><div class="b" style="left:349px;top:457px;width:84px;height:20px;background:#ffffff;"></div><div class="b" style="left:434px;top:457px;width:126px;height:20px;background:#ffffff;"></div><div class="b" style="left:561px;top:457px;width:91px;height:20px;background:#ffffff;"></div><div class="b" style="left:653px;top:457px;width:70px;height:20px;background:#f3f3f3;"></div><div class="b" style="left:724px;top:457px;width:83px;height:20px;background:#f3f3f3;"></div><div class="b" style="left:26px;top:477px;width:781px;height:1px;background:#d9d9d9;"></div><div class="b" style="left:136px;top:456px;width:1px;height:22px;background:#d9d9d9;"></div><div class="b" style="left:348px;top:456px;width:1px;height:22px;background:#d9d9d9;"></div><div class="b" style="left:433px;top:456px;width:1px;height:22px;background:#d9d9d9;"></div><div class="b" style="left:560px;top:456px;width:1px;height:22px;background:#d9d9d9;"></div><div class="b" style="left:652px;top:456px;width:1px;height:22px;background:#d9d9d9;"></div><div class="b" style="left:723px;top:456px;width:1px;height:22px;background:#d9d9d9;"></div><div class="b" style="left:807px;top:456px;width:1px;height:22px;background:#d9d9d9;"></div><div class="b" style="left:25px;top:456px;width:1px;height:22px;background:#d9d9d9;"></div><div class="b mb" style="left:29px;top:461px"></div><div class="t n" style="top:462px;left:47px;">4.3</div><div class="t r" style="top:462px;left:152px;letter-spacing:-0.179px;">Install Aggregate Base</div><div class="t n" style="top:462px;left:354px;">4.3</div><div class="t n" style="top:462px;right:263px;">45,000.00</div><div class="t r" style="top:462px;left:566px;letter-spacing:-0.111px;">Ton</div><div class="t n" style="top:462px;right:100px;">$2.17</div><div class="t n" style="top:462px;right:16px;">$97,567.33</div><div class="b" style="left:26px;top:478px;width:110px;height:19px;background:#8cc5e0;"></div><div class="b" style="left:137px;top:478px;width:211px;height:19px;background:linear-gradient(90deg,#8cc5e0 0%,#ffffff 100%);"></div><div class="b" style="left:349px;top:478px;width:84px;height:19px;background:#ffffff;"></div><div class="b" style="left:434px;top:478px;width:126px;height:19px;background:#ffffff;"></div><div class="b" style="left:561px;top:478px;width:91px;height:19px;background:#ffffff;"></div><div class="b" style="left:653px;top:478px;width:70px;height:19px;background:#ffffff;"></div><div class="b" style="left:724px;top:478px;width:83px;height:19px;background:#ffffff;"></div><div class="b" style="left:26px;top:497px;width:781px;height:1px;background:#d9d9d9;"></div><div class="b" style="left:136px;top:477px;width:1px;height:21px;background:#d9d9d9;"></div><div class="b" style="left:348px;top:477px;width:1px;height:21px;background:#d9d9d9;"></div><div class="b" style="left:433px;top:477px;width:1px;height:21px;background:#d9d9d9;"></div><div class="b" style="left:560px;top:477px;width:1px;height:21px;background:#d9d9d9;"></div><div class="b" style="left:652px;top:477px;width:1px;height:21px;background:#d9d9d9;"></div><div class="b" style="left:723px;top:477px;width:1px;height:21px;background:#d9d9d9;"></div><div class="b" style="left:807px;top:477px;width:1px;height:21px;background:#d9d9d9;"></div><div class="b" style="left:25px;top:477px;width:1px;height:21px;background:#d9d9d9;"></div><svg class="b" style="left:30px;top:483px" width="7" height="7"><path d="M3.5 0V7M0 3.5H7" stroke="#2a2a2a" stroke-width="1"/></svg><div class="t n" style="top:483px;left:47px;">4.3.1</div><div class="t r" style="top:483px;left:162px;letter-spacing:-0.319px;">Place Aggregate Base</div><div class="t n" style="top:483px;left:354px;">4.3.1</div><div class="t n" style="top:483px;right:263px;">45,000.00</div><div class="t r" style="top:483px;left:566px;letter-spacing:-0.111px;">Ton</div><div class="t n" style="top:483px;right:100px;">$1.63</div><div class="t n" style="top:483px;right:16px;">$73,460.92</div><div class="b" style="left:26px;top:498px;width:110px;height:20px;background:#8cc5e0;"></div><div class="b" style="left:137px;top:498px;width:211px;height:20px;background:linear-gradient(90deg,#8cc5e0 0%,#ffffff 100%);"></div><div class="b" style="left:349px;top:498px;width:84px;height:20px;background:#ffffff;"></div><div class="b" style="left:434px;top:498px;width:126px;height:20px;background:#ffffff;"></div><div class="b" style="left:561px;top:498px;width:91px;height:20px;background:#ffffff;"></div><div class="b" style="left:653px;top:498px;width:70px;height:20px;background:#ffffff;"></div><div class="b" style="left:724px;top:498px;width:83px;height:20px;background:#ffffff;"></div><div class="b" style="left:26px;top:518px;width:781px;height:1px;background:#d9d9d9;"></div><div class="b" style="left:136px;top:497px;width:1px;height:22px;background:#d9d9d9;"></div><div class="b" style="left:348px;top:497px;width:1px;height:22px;background:#d9d9d9;"></div><div class="b" style="left:433px;top:497px;width:1px;height:22px;background:#d9d9d9;"></div><div class="b" style="left:560px;top:497px;width:1px;height:22px;background:#d9d9d9;"></div><div class="b" style="left:652px;top:497px;width:1px;height:22px;background:#d9d9d9;"></div><div class="b" style="left:723px;top:497px;width:1px;height:22px;background:#d9d9d9;"></div><div class="b" style="left:807px;top:497px;width:1px;height:22px;background:#d9d9d9;"></div><div class="b" style="left:25px;top:497px;width:1px;height:22px;background:#d9d9d9;"></div><svg class="b" style="left:30px;top:503px" width="7" height="7"><path d="M3.5 0V7M0 3.5H7" stroke="#2a2a2a" stroke-width="1"/></svg><div class="t n" style="top:503px;left:47px;">4.3.2</div><div class="t r" style="top:503px;left:162px;letter-spacing:-0.258px;">Blue Top Aggregate Base</div><div class="t n" style="top:503px;left:354px;">4.3.2</div><div class="t n" style="top:503px;right:263px;">400,000.00</div><div class="t r" style="top:503px;left:566px;letter-spacing:-0.302px;">Square Yard</div><div class="t n" style="top:503px;right:100px;">$0.06</div><div class="t n" style="top:503px;right:16px;">$24,106.42</div><div class="b" style="left:26px;top:519px;width:110px;height:19px;background:#e68c8c;"></div><div class="b" style="left:137px;top:519px;width:211px;height:19px;background:linear-gradient(90deg,#e68c8c 0%,#ffffff 100%);"></div><div class="b" style="left:349px;top:519px;width:84px;height:19px;background:#ffffff;"></div><div class="b" style="left:434px;top:519px;width:126px;height:19px;background:#ffffff;"></div><div class="b" style="left:561px;top:519px;width:91px;height:19px;background:#ffffff;"></div><div class="b" style="left:653px;top:519px;width:70px;height:19px;background:#f3f3f3;"></div><div class="b" style="left:724px;top:519px;width:83px;height:19px;background:#f3f3f3;"></div><div class="b" style="left:26px;top:538px;width:781px;height:1px;background:#d9d9d9;"></div><div class="b" style="left:136px;top:518px;width:1px;height:21px;background:#d9d9d9;"></div><div class="b" style="left:348px;top:518px;width:1px;height:21px;background:#d9d9d9;"></div><div class="b" style="left:433px;top:518px;width:1px;height:21px;background:#d9d9d9;"></div><div class="b" style="left:560px;top:518px;width:1px;height:21px;background:#d9d9d9;"></div><div class="b" style="left:652px;top:518px;width:1px;height:21px;background:#d9d9d9;"></div><div class="b" style="left:723px;top:518px;width:1px;height:21px;background:#d9d9d9;"></div><div class="b" style="left:807px;top:518px;width:1px;height:21px;background:#d9d9d9;"></div><div class="b" style="left:25px;top:518px;width:1px;height:21px;background:#d9d9d9;"></div><div class="b mb" style="left:29px;top:523px"></div><div class="t rb" style="top:524px;left:47px;">5</div><div class="t rb" style="top:524px;left:142px;letter-spacing:0.237px;">Asphalt Concrete Hot Mix Type A</div><div class="t n" style="top:524px;left:354px;letter-spacing:-0.315px;">303 4263</div><div class="t n" style="top:524px;right:263px;">35,000.00</div><div class="t r" style="top:524px;left:566px;letter-spacing:-0.111px;">Ton</div><div class="t n" style="top:524px;right:100px;">$42.62</div><div class="t n" style="top:524px;right:16px;">$1,491,580.59</div><div class="b" style="left:26px;top:539px;width:110px;height:19px;background:#a6d2bc;"></div><div class="b" style="left:137px;top:539px;width:211px;height:19px;background:linear-gradient(90deg,#a6d2bc 0%,#ffffff 100%);"></div><div class="b" style="left:349px;top:539px;width:84px;height:19px;background:#ffffff;"></div><div class="b" style="left:434px;top:539px;width:126px;height:19px;background:#ffffff;"></div><div class="b" style="left:561px;top:539px;width:91px;height:19px;background:#ffffff;"></div><div class="b" style="left:653px;top:539px;width:70px;height:19px;background:#ffffff;"></div><div class="b" style="left:724px;top:539px;width:83px;height:19px;background:#ffffff;"></div><div class="b" style="left:26px;top:558px;width:781px;height:1px;background:#d9d9d9;"></div><div class="b" style="left:136px;top:538px;width:1px;height:21px;background:#d9d9d9;"></div><div class="b" style="left:348px;top:538px;width:1px;height:21px;background:#d9d9d9;"></div><div class="b" style="left:433px;top:538px;width:1px;height:21px;background:#d9d9d9;"></div><div class="b" style="left:560px;top:538px;width:1px;height:21px;background:#d9d9d9;"></div><div class="b" style="left:652px;top:538px;width:1px;height:21px;background:#d9d9d9;"></div><div class="b" style="left:723px;top:538px;width:1px;height:21px;background:#d9d9d9;"></div><div class="b" style="left:807px;top:538px;width:1px;height:21px;background:#d9d9d9;"></div><div class="b" style="left:25px;top:538px;width:1px;height:21px;background:#d9d9d9;"></div><svg class="b" style="left:30px;top:544px" width="7" height="7"><path d="M3.5 0V7M0 3.5H7" stroke="#2a2a2a" stroke-width="1"/></svg><div class="t n" style="top:544px;left:47px;">5.1</div><div class="t r" style="top:544px;left:152px;letter-spacing:-0.348px;">Furnish &amp; Haul Hot Mix</div><div class="t n" style="top:544px;left:354px;">5.1</div><div class="t n" style="top:544px;right:263px;">35,000.00</div><div class="t r" style="top:544px;left:566px;letter-spacing:-0.111px;">Ton</div><div class="t n" style="top:544px;right:100px;">$39.27</div><div class="t n" style="top:544px;right:16px;">$1,374,562.54</div></div><svg class="b" style="left:9px;top:96px" width="10" height="8" viewBox="0 0 10 8"><path d="M0.5 3.8H8.3" stroke="#2a2a2a" stroke-width="1" fill="none"/><path d="M5.2 0.9L8.1 3.8L5.2 6.7" stroke="#2a2a2a" stroke-width="1.25" fill="none"/></svg><div class="b" style="left:4px;top:556px;width:814px;height:1px;background:#d6d6d6;"></div><div class="b" style="left:4px;top:557px;width:814px;height:24px;background:#ffffff;"></div><div class="t fb" style="top:563px;right:685px;">102</div><div class="b" style="left:718px;top:550px;width:100px;height:29px;border:3px solid #ee3a3c;border-right:none;background:transparent;box-shadow:inset 0 4px 3px -2px rgba(0,0,0,0.45),inset 3px 0 3px -2px rgba(0,0,0,0.25)"></div><div class="t fb" style="top:563px;right:14px;">$5,835,106.09</div>
</body></html>
